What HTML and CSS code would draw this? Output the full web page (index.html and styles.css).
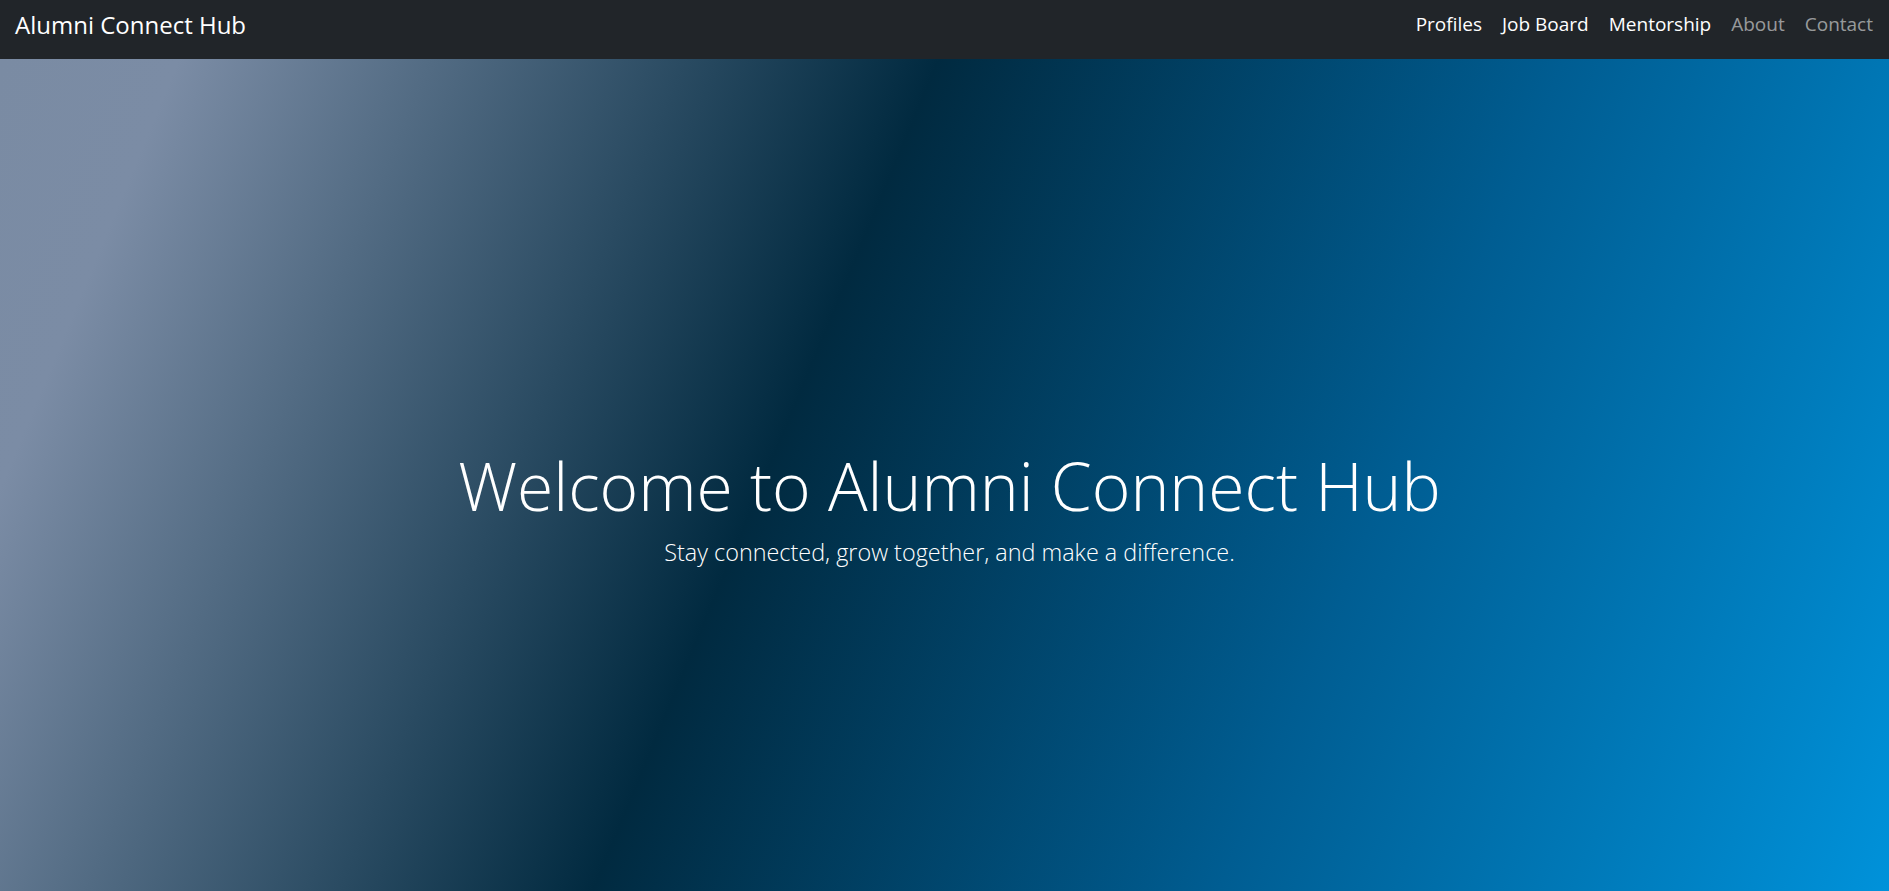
FILE: index.html
```html
<!DOCTYPE html>
<html lang="en">
<head>
<meta charset="utf-8">
<title>Alumni Connect Hub</title>
<link rel="stylesheet" href="styles.css">
</head>
<body>
<nav class="navbar">
  <a class="brand" href="#">Alumni Connect Hub</a>
  <ul class="nav-links">
    <li><a class="nav-link active" href="#">Profiles</a></li>
    <li><a class="nav-link active" href="#">Job Board</a></li>
    <li><a class="nav-link active" href="#">Mentorship</a></li>
    <li><a class="nav-link" href="#">About</a></li>
    <li><a class="nav-link" href="#">Contact</a></li>
  </ul>
</nav>
<header class="hero">
  <div class="hero-content">
    <h1 class="hero-title">Welcome to Alumni Connect Hub</h1>
    <p class="hero-lead">Stay connected, grow together, and make a difference.</p>
  </div>
</header>
</body>
</html>
```
FILE: styles.css
```css
* { box-sizing: border-box; }
html, body { margin: 0; padding: 0; }
body {
  font-family: "Segoe UI", "Open Sans", "Noto Sans", sans-serif;
  color: #fff;
  background: #212529;
  height: 891px;
  overflow: hidden;
}
.navbar {
  height: 59px;
  background: #212529;
  display: flex;
  align-items: center;
  justify-content: space-between;
  padding: 0 6px 10px 15px;
}
.brand {
  color: #fff;
  text-decoration: none;
  font-size: 24px;
  font-weight: 400;
  line-height: 1;
}
.nav-links {
  list-style: none;
  margin: 0;
  padding: 0;
  display: flex;
}
.nav-link {
  display: block;
  padding: 0 10px;
  font-size: 19px;
  line-height: 1;
  color: rgba(255, 255, 255, 0.55);
  text-decoration: none;
}
.nav-link.active { color: #fff; }
.hero {
  height: 832px;
  background: linear-gradient(112.6deg, #7a8ba3 0%, #7b8ca5 8%, #012a40 42%, #005d92 70%, #0092da 100%);
  display: flex;
  align-items: center;
  justify-content: center;
  text-align: center;
  padding: 66px 0 0 10px;
}
.hero-title {
  margin: 0 0 10px;
  font-size: 66px;
  font-weight: 300;
  line-height: 1.2;
}
.hero-lead {
  margin: 0;
  font-size: 23.4px;
  font-weight: 300;
  line-height: 1.5;
}
```
